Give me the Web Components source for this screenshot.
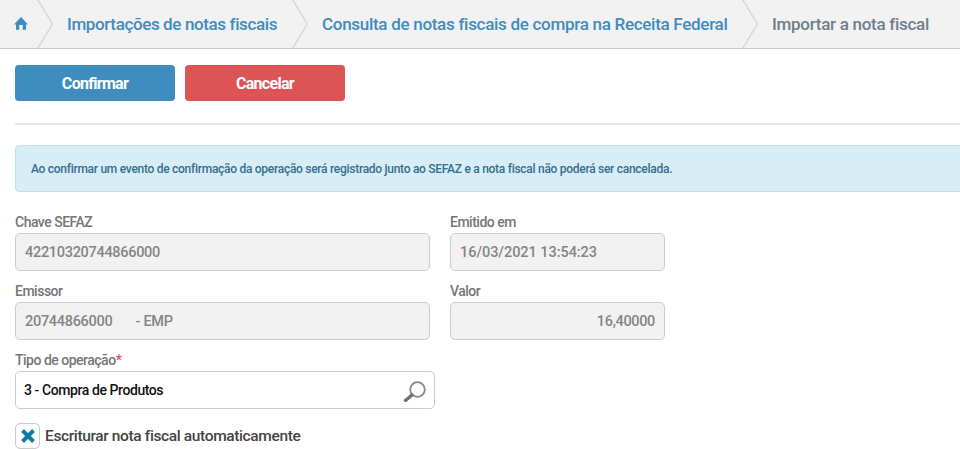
<!DOCTYPE html>
<html lang="pt"><head><meta charset="utf-8"><title>Importar a nota fiscal</title>
<style>html,body{margin:0;padding:0;background:#fff;overflow:hidden}body{font-family:Roboto,"Liberation Sans",sans-serif;width:960px;height:449px}</style>
</head><body>
<x-page>
<x-crumbs>
<x-crumb home w="54"><svg width="14" height="13" viewBox="0 0 14 13"><path d="M7 0 14 7.500H12V12.800H8.700V8H5.300V12.800H2V7.500H0z" fill="#3f8cbf"/></svg></x-crumb>
<x-crumb w="255">Importações de notas fiscais</x-crumb>
<x-crumb w="450" ls="-.29">Consulta de notas fiscais de compra na Receita Federal</x-crumb>
<x-crumb last ls="-.29">Importar a nota fiscal</x-crumb>
</x-crumbs>
<x-actions>
<x-btn color="#3f8dbf">Confirmar</x-btn>
<x-btn color="#dd5456">Cancelar</x-btn>
</x-actions>
<x-rule></x-rule>
<x-alert>Ao confirmar um evento de confirmação da operação será registrado junto ao SEFAZ e a nota fiscal não poderá ser cancelada.</x-alert>
<x-row first>
<x-field label="Chave SEFAZ" w="415" ls="-.3">42210320744866000</x-field>
<x-field label="Emitido em" w="215" ls="-.05">16/03/2021 13:54:23</x-field>
</x-row>
<x-row>
<x-field label="Emissor" w="415" ls="-.3"><span style="white-space:pre">20744866000&#160;&#160;&#160;&#160;&#160;&#160; - EMP</span></x-field>
<x-field label="Valor" w="215" right ls="-.35">16,40000</x-field>
</x-row>
<x-row>
<x-field label="Tipo de operação" w="420" required editable>3 - Compra de Produtos<svg slot="icon" width="24" height="24" viewBox="0 0 24 24"><circle cx="14.500" cy="11.500" r="7.300" fill="none" stroke="#858585" stroke-width="1.800"/><path d="M9 17 2.500 22.500" stroke="#707070" stroke-width="3.400" stroke-linecap="round"/></svg></x-field>
</x-row>
<x-check>Escriturar nota fiscal automaticamente</x-check>
</x-page>
<script>
function def(name,css,html,init){
  customElements.define(name,class extends HTMLElement{
    constructor(){super();const r=this.attachShadow({mode:'open'});r.innerHTML='<style>'+css+'</style>'+html;}
    connectedCallback(){if(init)init.call(this,this.shadowRoot);}
  });
}
def('x-page',':host{display:block;width:960px;height:449px;overflow:hidden;font-family:Roboto,"Liberation Sans",sans-serif}','<slot></slot>');
def('x-crumbs',':host{display:flex;height:48px;background:#f2f2f2;border-bottom:1px solid #cbcbcb;overflow:hidden}','<slot></slot>');
def('x-crumb',`:host{display:flex;align-items:center;height:48px;padding-bottom:1px;flex:none;box-sizing:border-box;font-size:17px;font-weight:500;letter-spacing:-.38px;color:#3f8cbf;white-space:nowrap;position:relative;padding-left:13px}
:host([home]){padding-left:14px}
:host([last]){color:#6f7f8a}
svg.c{position:absolute;right:0;top:0}`,
'<slot></slot><svg class="c" width="18" height="48" viewBox="0 0 18 48"><path d="M1.500-.5 16.500 24 1.500 48.500" fill="none" stroke="#d6d6d6" stroke-width="1.400"/></svg>',
function(r){const w=this.getAttribute('w');if(w)this.style.width=w+'px';else r.querySelector('svg.c').remove();
 const ls=this.getAttribute('ls');if(ls)this.style.letterSpacing=ls+'px';});
def('x-actions',':host{display:flex;gap:10px;padding:16px 15px 0}','<slot></slot>');
def('x-btn',':host{display:flex;align-items:center;justify-content:center;width:160px;height:36px;border-radius:4px;color:#fff;font-size:16px;font-weight:700;letter-spacing:-.7px}','<slot></slot>',function(){this.style.background=this.getAttribute('color');});
def('x-rule',':host{display:block;height:2px;background:#e8e8e8;margin:22px 0 20px 15px}','');
def('x-alert',':host{display:flex;align-items:center;box-sizing:border-box;height:47px;margin-left:15px;margin-right:-10px;padding-left:15px;background:#d9edf7;border:1px solid #bfe1ee;border-radius:4px;color:#31708f;font-size:12px;font-weight:500;letter-spacing:-.28px;white-space:nowrap}','<slot></slot>');
def('x-row',':host{display:flex;gap:20px;padding-left:15px;margin-top:14px}:host([first]){margin-top:24px}','<slot></slot>');
def('x-field',`:host{display:block;flex:none;font-size:14px;font-weight:500;color:#767676}
.l{height:13px;line-height:13px;margin-bottom:4px;white-space:nowrap;letter-spacing:-.5px;font-size:14px}
.q{color:#d9534f;display:none}
.b{display:flex;align-items:center;justify-content:space-between;box-sizing:border-box;height:38px;padding:0 9px;border:1px solid #ccc;border-radius:5px;background:#f2f2f2;color:#858585;font-size:14.500px;white-space:nowrap}
:host([right]) .b{justify-content:flex-end}
:host([editable]) .b{background:#fff;color:#111;font-size:14px;letter-spacing:-.42px;padding:0 7px 0 8px}
:host([required]) .q{display:inline}`,
'<div class="l"><span class="t"></span><span class="q">*</span></div><div class="b"><span><slot></slot></span><slot name="icon"></slot></div>',
function(r){r.querySelector('.t').textContent=this.getAttribute('label');this.style.width=this.getAttribute('w')+'px';
 const ls=this.getAttribute('ls');if(ls)r.querySelector('.b').style.letterSpacing=ls+'px';});
def('x-check',`:host{display:flex;align-items:center;gap:5px;margin:14px 0 0 15px;font-size:15.500px;font-weight:500;letter-spacing:-.37px;color:#444;white-space:nowrap}
.k{display:flex;align-items:center;justify-content:center;box-sizing:border-box;width:25px;height:26px;border:1px solid #ccc;border-radius:5px;background:#fff;flex:none}`,
'<span class="k"><svg width="16" height="16" viewBox="0 0 16 16"><path d="M2.500 2.500l11 11M13.500 2.500l-11 11" stroke="#0f7ca3" stroke-width="4"/></svg></span><span><slot></slot></span>');
</script>
</body></html>
